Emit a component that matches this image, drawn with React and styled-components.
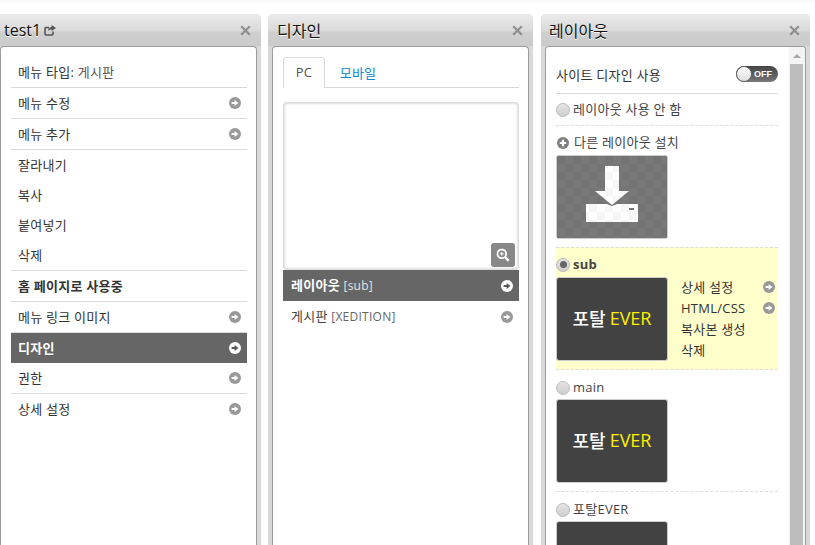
import styled, { createGlobalStyle } from "styled-components";

const GlobalStyle = createGlobalStyle`
    html, body {
        margin: 0;
        padding: 0;
        height: 545px;
        overflow: hidden;
        background-color: #fff;
    }
    body {
        font-family: "Open Sans", "Noto Sans CJK KR", "Noto Sans", sans-serif;
        font-size: 13px;
        letter-spacing: 0.25px;
        color: #333;
    }
`;

function ArrowIcon({ color = "#999", arrow = "#fff" }) {
    return (
        <svg width="12" height="12" viewBox="0 0 12 12">
            <circle cx="6" cy="6" r="6" fill={color} />
            <path d="M2.6 5h3V2.9L9.4 6 5.6 9.1V7h-3z" fill={arrow} />
        </svg>
    );
}

function CloseIcon() {
    return (
        <svg width="11" height="11" viewBox="0 0 11 11">
            <path d="M1.2 1.2l8.6 8.6M9.8 1.2L1.2 9.8" stroke="#8f8f8f" strokeWidth="2.2" fill="none" />
        </svg>
    );
}

function ShareIcon() {
    return (
        <svg width="12" height="11" viewBox="0 0 12 11">
            <path d="M9 6.5V9a1 1 0 0 1-1 1H2a1 1 0 0 1-1-1V3.5a1 1 0 0 1 1-1h3" stroke="#555" strokeWidth="1.6" fill="none" />
            <path d="M7.5 0L12 3 7.5 6V4.4C5.6 4.4 4.5 5 3.8 6.4 3.9 4 5.3 2.2 7.5 2z" fill="#555" />
        </svg>
    );
}

function PlusIcon() {
    return (
        <svg width="12" height="12" viewBox="0 0 12 12">
            <circle cx="6" cy="6" r="6" fill="#808080" />
            <path d="M6 2.8v6.4M2.8 6h6.4" stroke="#fff" strokeWidth="2" />
        </svg>
    );
}

function SearchIcon() {
    return (
        <svg width="14" height="14" viewBox="0 0 14 14">
            <circle cx="5.8" cy="5.8" r="4.3" stroke="#fff" strokeWidth="1.8" fill="none" />
            <path d="M3.8 5.8h4M5.8 3.8v4" stroke="#fff" strokeWidth="1" />
            <path d="M9 9l3.8 3.8" stroke="#fff" strokeWidth="2.4" />
        </svg>
    );
}

function DownloadArt() {
    return (
        <svg width="110" height="82" viewBox="0 0 110 82">
            <defs>
                <pattern id="darkTile" width="16" height="16" patternUnits="userSpaceOnUse">
                    <rect width="16" height="16" fill="#797979" />
                    <rect width="8" height="8" fill="#747474" />
                    <rect x="8" y="8" width="8" height="8" fill="#747474" />
                </pattern>
                <pattern id="lightTile" width="16" height="16" patternUnits="userSpaceOnUse">
                    <rect width="16" height="16" fill="#fff" />
                    <rect width="8" height="8" fill="#f6f6f6" />
                    <rect x="8" y="8" width="8" height="8" fill="#f6f6f6" />
                </pattern>
            </defs>
            <rect width="110" height="82" fill="url(#darkTile)" />
            <path d="M48 10h14v25h10L55 49 38 35h10z" fill="url(#lightTile)" />
            <path d="M29 48h21l5 2 5-2h21v18H29z" fill="url(#lightTile)" />
            <rect x="72" y="52" width="5" height="2" fill="#777" />
        </svg>
    );
}

const Page = styled.div`
    display: flex;
    gap: 7px;
    margin-left: -4px;
    padding-top: 14px;
    box-sizing: border-box;
    width: 819px;
    height: 545px;
    overflow: hidden;
    background: linear-gradient(#f7f7f7, #fff 4px);
`;

const Panel = styled.section`
    box-sizing: border-box;
    width: ${(p) => p.$width}px;
    margin-left: ${(p) => p.$shift || 0}px;
    flex: none;
    display: flex;
    flex-direction: column;
    background-color: #d9d9d9;
    border-radius: 5px 5px 0 0;
    padding: 0 4px;
`;

const PanelHead = styled.header`
    height: 32px;
    margin: 0 -4px;
    padding: 0 10px 0 8px;
    box-sizing: border-box;
    display: flex;
    align-items: center;
    justify-content: space-between;
    border-radius: 5px 5px 0 0;
    background: linear-gradient(#ebebeb 0, #d9d9d9 17px, #cfcfcf 18px, #cbcbcb 100%);
`;

const PanelTitle = styled.h2`
    margin: 0 0 0 ${(p) => p.$nudge || 0}px;
    display: flex;
    align-items: center;
    gap: 3px;
    font-size: 16px;
    font-weight: 400;
    letter-spacing: 0;
    color: #111;
    text-shadow: 0 1px 0 #fff;
`;

const PanelBody = styled.div`
    flex: 1;
    display: flex;
    min-height: 0;
    overflow: hidden;
    background-color: #fff;
    border: 1px solid #9c9c9c;
    border-bottom: 0;
    border-radius: 4px 4px 0 0;
`;

const MenuList = styled.ul`
    list-style: none;
    margin: 0;
    padding: 10px 9px 0 10px;
    flex: 1;
`;

const MenuRow = styled.li`
    height: ${(p) => (p.$line ? 31 : 30)}px;
    box-sizing: border-box;
    padding: 0 6px 2px 7px;
    display: flex;
    align-items: center;
    justify-content: space-between;
    border-bottom: ${(p) => (p.$line ? "1px solid #d9d9d9" : "0")};
    font-weight: ${(p) => (p.$bold || p.$active ? 700 : 400)};
    color: ${(p) => (p.$active ? "#fff" : "#333")};
    background-color: ${(p) => (p.$active ? "#666" : "transparent")};

    svg {
        margin-top: 2px;
    }
`;

const TypeValue = styled.span`
    color: #555;
`;

const DesignColumn = styled.div`
    flex: 1;
    padding: 10px 9px 0 10px;
`;

const Tabs = styled.div`
    display: flex;
    height: 31px;
    box-sizing: border-box;
    border-bottom: 1px solid #d9d9d9;
    margin-bottom: 14px;
`;

const Tab = styled.div`
    width: ${(p) => p.$width}px;
    height: 31px;
    box-sizing: border-box;
    padding-bottom: 2px;
    display: flex;
    align-items: center;
    justify-content: center;
    color: ${(p) => (p.$active ? "#555" : "#0a86cf")};
    background-color: ${(p) => (p.$active ? "#fff" : "transparent")};
    border: 1px solid ${(p) => (p.$active ? "#d9d9d9" : "transparent")};
    border-bottom: 0;
    border-radius: 4px 4px 0 0;
`;

const Preview = styled.div`
    position: relative;
    height: 168px;
    box-sizing: border-box;
    border: 1px solid #ddd;
    border-radius: 3px;
    box-shadow: inset 0 0 3px #bbb;
`;

const ZoomButton = styled.button`
    position: absolute;
    right: 3px;
    bottom: 2px;
    width: 24px;
    height: 24px;
    padding: 0;
    display: flex;
    align-items: center;
    justify-content: center;
    border: 0;
    border-radius: 3px;
    background-color: #888;
`;

const LayoutRow = styled.div`
    height: 31px;
    box-sizing: border-box;
    padding: 0 6px 2px 8px;
    display: flex;
    align-items: center;
    justify-content: space-between;
    color: ${(p) => (p.$active ? "#fff" : "#444")};
    background-color: ${(p) => (p.$active ? "#666" : "transparent")};
    font-weight: ${(p) => (p.$active ? 700 : 400)};

    svg {
        margin-top: 2px;
    }
`;

const Muted = styled.span`
    font-weight: 400;
    font-size: 12px;
    color: ${(p) => (p.$active ? "#e4e4e4" : "#666")};
`;

const ScrollColumn = styled.div`
    flex: 1;
    padding: 10px 11px 0 10px;
    overflow: hidden;
`;

const ToggleRow = styled.div`
    height: 37px;
    box-sizing: border-box;
    padding-bottom: 2px;
    display: flex;
    align-items: center;
    justify-content: space-between;
    border-bottom: 1px solid #d9d9d9;
`;

const Toggle = styled.div`
    width: 42px;
    height: 16px;
    box-sizing: border-box;
    padding-right: 6px;
    display: flex;
    align-items: center;
    justify-content: flex-end;
    position: relative;
    border-radius: 8px;
    background: linear-gradient(#444, #777);
    color: #fff;
    font-size: 9px;
    font-weight: 700;
    letter-spacing: 0;
    font-family: "Liberation Sans", sans-serif;

    &::before {
        content: "";
        position: absolute;
        left: 0;
        top: 0;
        width: 16px;
        height: 16px;
        box-sizing: border-box;
        border: 1px solid #666;
        border-radius: 50%;
        background: linear-gradient(#fff, #ddd);
    }
`;

const Option = styled.div`
    padding: ${(p) => p.$pad || "0"};
    border-bottom: ${(p) => (p.$dashed ? "1px dashed #ddd" : "0")};
    background-color: ${(p) => (p.$selected ? "#ffffcc" : "transparent")};
    border-top: ${(p) => (p.$selected ? "1px dashed #ddd" : "0")};
`;

const OptionLabel = styled.div`
    height: ${(p) => p.$height || 23}px;
    box-sizing: border-box;
    padding: 0 0 ${(p) => p.$lift || 2}px ${(p) => p.$indent || 0}px;
    display: flex;
    align-items: center;
    gap: ${(p) => p.$gap || 3}px;
    color: #444;
    font-weight: ${(p) => (p.$bold ? 700 : 400)};

    svg {
        margin-top: 2px;
    }
`;

const Radio = styled.span`
    width: 14px;
    height: 14px;
    box-sizing: border-box;
    margin-top: 2px;
    flex: none;
    display: flex;
    align-items: center;
    justify-content: center;
    border: 1px solid #bbb;
    border-radius: 50%;
    background: linear-gradient(#e4e4e4, #cfcfcf);

    &::after {
        content: "";
        width: 7px;
        height: 7px;
        border-radius: 50%;
        background-color: ${(p) => (p.$on ? "#666" : "transparent")};
    }
`;

const Thumb = styled.div`
    width: 112px;
    height: 84px;
    box-sizing: border-box;
    padding-bottom: 2px;
    display: flex;
    align-items: center;
    justify-content: center;
    gap: 4px;
    overflow: hidden;
    border: 1px solid #ccc;
    border-radius: 3px;
    background-color: #424242;
    color: #fff;
    font-size: 18px;
    font-weight: 500;
    letter-spacing: 0;
`;

const ArtThumb = styled(Thumb)`
    padding-bottom: 0;
`;

const Ever = styled.span`
    color: #fff000;
    font-weight: 400;
`;

const ThumbRow = styled.div`
    display: flex;
    gap: 13px;
`;

const ActionList = styled.ul`
    list-style: none;
    margin: 0;
    padding: 0;
    flex: 1;
`;

const ActionRow = styled.li`
    height: 21px;
    box-sizing: border-box;
    padding: 0 3px 2px 0;
    display: flex;
    align-items: center;
    justify-content: space-between;
    color: #333;
`;

const Scrollbar = styled.div`
    width: 16px;
    flex: none;
    box-sizing: border-box;
    padding: 0 2px 0 1px;
    display: flex;
    flex-direction: column;
    background-color: #f4f4f4;
`;

const ScrollUp = styled.div`
    height: 17px;
    display: flex;
    align-items: center;
    justify-content: center;

    &::before {
        content: "";
        border-left: 4px solid transparent;
        border-right: 4px solid transparent;
        border-bottom: 4px solid #a6a6a6;
    }
`;

const ScrollThumb = styled.div`
    flex: 1;
    background-color: #bdbdbd;
`;

const mainMenu = [
    { label: "메뉴 수정", arrow: true, line: true },
    { label: "메뉴 추가", arrow: true, line: true },
    { label: "잘라내기" },
    { label: "복사" },
    { label: "붙여넣기" },
    { label: "삭제", line: true },
    { label: "홈 페이지로 사용중", bold: true, line: true },
    { label: "메뉴 링크 이미지", arrow: true, line: true },
];

function PortalThumb() {
    return (
        <Thumb>
            포탈 <Ever>EVER</Ever>
        </Thumb>
    );
}

export default function App() {
    return (
        <>
            <GlobalStyle />
            <Page>
                <Panel $width={265}>
                    <PanelHead>
                        <PanelTitle>test1 <ShareIcon /></PanelTitle>
                        <CloseIcon />
                    </PanelHead>
                    <PanelBody>
                        <MenuList>
                            <MenuRow $line>
                                <span>메뉴 타입: <TypeValue>게시판</TypeValue></span>
                            </MenuRow>
                            {mainMenu.map((item) => (
                                <MenuRow key={item.label} $line={item.line} $bold={item.bold}>
                                    {item.label}
                                    {item.arrow && <ArrowIcon />}
                                </MenuRow>
                            ))}
                            <MenuRow $active>
                                디자인
                                <ArrowIcon color="#fff" arrow="#555" />
                            </MenuRow>
                            <MenuRow $line>
                                권한
                                <ArrowIcon />
                            </MenuRow>
                            <MenuRow>
                                상세 설정
                                <ArrowIcon />
                            </MenuRow>
                        </MenuList>
                    </PanelBody>
                </Panel>

                <Panel $width={265}>
                    <PanelHead>
                        <PanelTitle $nudge={1}>디자인</PanelTitle>
                        <CloseIcon />
                    </PanelHead>
                    <PanelBody>
                        <DesignColumn>
                            <Tabs>
                                <Tab $active $width={42}>PC</Tab>
                                <Tab $width={66}>모바일</Tab>
                            </Tabs>
                            <Preview>
                                <ZoomButton><SearchIcon /></ZoomButton>
                            </Preview>
                            <LayoutRow $active>
                                <span>레이아웃 <Muted $active>[sub]</Muted></span>
                                <ArrowIcon color="#fff" arrow="#555" />
                            </LayoutRow>
                            <LayoutRow>
                                <span>게시판 <Muted>[XEDITION]</Muted></span>
                                <ArrowIcon />
                            </LayoutRow>
                        </DesignColumn>
                    </PanelBody>
                </Panel>

                <Panel $width={269} $shift={1}>
                    <PanelHead>
                        <PanelTitle>레이아웃</PanelTitle>
                        <CloseIcon />
                    </PanelHead>
                    <PanelBody>
                        <ScrollColumn>
                            <ToggleRow>
                                사이트 디자인 사용
                                <Toggle>OFF</Toggle>
                            </ToggleRow>
                            <Option $dashed $pad="4px 0 4px">
                                <OptionLabel><Radio />레이아웃 사용 안 함</OptionLabel>
                            </Option>
                            <Option $pad="5px 0 8px">
                                <OptionLabel $height={24} $indent={1} $gap={5} $lift={3}><PlusIcon />다른 레이아웃 설치</OptionLabel>
                                <ArtThumb><DownloadArt /></ArtThumb>
                            </Option>
                            <Option $selected $dashed $pad="6px 0 8px">
                                <OptionLabel $bold $lift={4}><Radio $on />sub</OptionLabel>
                                <ThumbRow>
                                    <PortalThumb />
                                    <ActionList>
                                        <ActionRow>상세 설정<ArrowIcon color="#999" /></ActionRow>
                                        <ActionRow>HTML/CSS<ArrowIcon color="#999" /></ActionRow>
                                        <ActionRow>복사본 생성</ActionRow>
                                        <ActionRow>삭제</ActionRow>
                                    </ActionList>
                                </ThumbRow>
                            </Option>
                            <Option $dashed $pad="6px 0 8px">
                                <OptionLabel><Radio />main</OptionLabel>
                                <PortalThumb />
                            </Option>
                            <Option $pad="6px 0 0">
                                <OptionLabel><Radio />포탈EVER</OptionLabel>
                                <Thumb />
                            </Option>
                        </ScrollColumn>
                        <Scrollbar>
                            <ScrollUp />
                            <ScrollThumb />
                        </Scrollbar>
                    </PanelBody>
                </Panel>
            </Page>
        </>
    );
}
